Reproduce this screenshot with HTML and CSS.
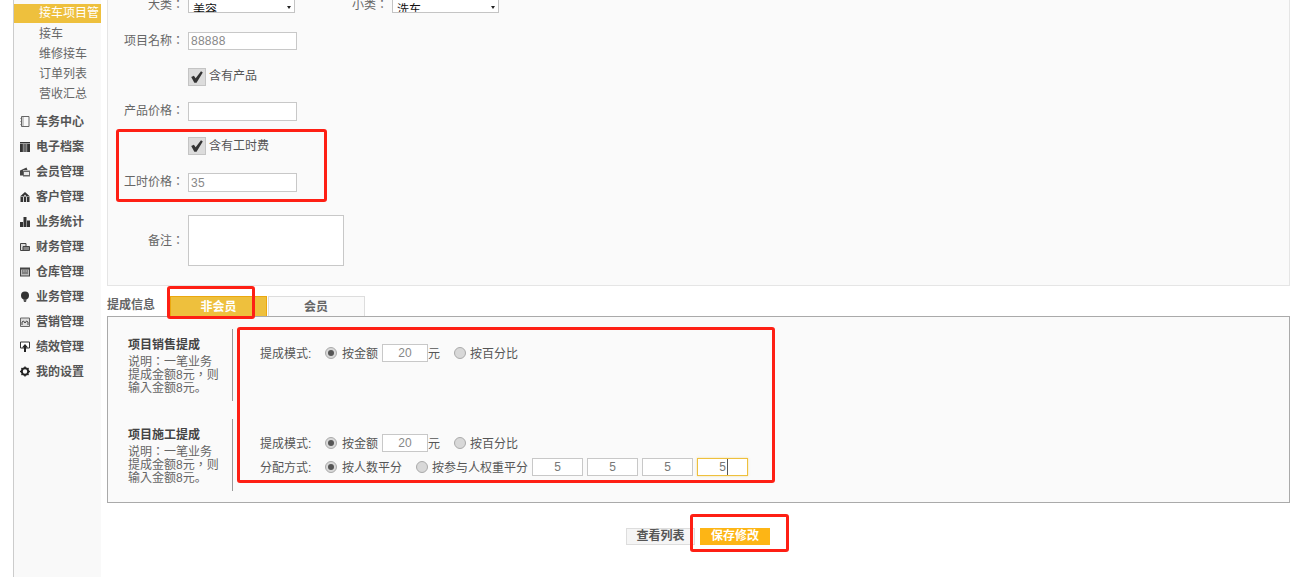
FILE: index.html
```html
<!DOCTYPE html>
<html lang="zh">
<head>
<meta charset="utf-8">
<title>项目编辑</title>
<link rel="stylesheet" href="styles.css">
</head>
<body>
<div class="layout">
  <aside class="sidebar">
    <div class="sub active">接车项目管</div>
    <div class="sub">接车</div>
    <div class="sub">维修接车</div>
    <div class="sub">订单列表</div>
    <div class="sub">营收汇总</div>
    <nav class="menu">
      <div class="menu-item"><svg class="ico" viewBox="0 0 10 11"><path d="M1.500.5h7.500v10H1.500zM.5 2.500h1M.5 5.500h1M.5 8.500h1" fill="none" stroke="#666" stroke-width="1"/><path d="M3 1v9" stroke="#999" stroke-width="1"/></svg>车务中心</div>
      <div class="menu-item"><svg class="ico" viewBox="0 0 10 11"><path d="M0 1h10v10H0z" fill="#333"/><path d="M3.300 3v8M5 3v8M6.700 3v8M0 2.500h10" stroke="#ccc" stroke-width=".7"/></svg>电子档案</div>
      <div class="menu-item"><svg class="ico" viewBox="0 0 10 11"><path d="M0 4.500 6.500 1.500l1 2.500H3v5.500H0z" fill="#444"/><path d="M3 4.500h7v6H3z" fill="#666"/><path d="M4 6h5v3H4z" fill="#e8e8e8"/></svg>会员管理</div>
      <div class="menu-item"><svg class="ico" viewBox="0 0 10 11"><path d="M5 1 10 5.500H0z" fill="#333"/><path d="M.5 6H3v5H.5zM3.800 6h2.400v5H3.800zM7 6h2.500v5H7z" fill="#333"/><circle cx="5" cy="4.500" r=".8" fill="#eee"/></svg>客户管理</div>
      <div class="menu-item"><svg class="ico" viewBox="0 0 10 11"><path d="M0 6h3v5H0zM3.500 1h3v10h-3zM7 4.500h3V11H7z" fill="#333"/></svg>业务统计</div>
      <div class="menu-item"><svg class="ico" viewBox="0 0 10 11"><path d="M.5 2.500h5.500v7H.5z" fill="#ddd" stroke="#444"/><path d="M3 5.500h6.500v4H3z" fill="#888" stroke="#444"/></svg>财务管理</div>
      <div class="menu-item"><svg class="ico" viewBox="0 0 10 11"><path d="M0 1.500h10v9H0z" fill="#444"/><path d="M1 3.500h8v6H1z" fill="#bbb"/><path d="M2 4.500h1.500v1H2zM4.300 4.500h1.500v1H4.300zM6.500 4.500H8v1H6.500zM2 6.500h6v1H2z" fill="#444"/></svg>仓库管理</div>
      <div class="menu-item"><svg class="ico" viewBox="0 0 10 11"><circle cx="5" cy="4.500" r="4" fill="#333"/><path d="M3.300 8h3.400l-.7 3H4z" fill="#555"/></svg>业务管理</div>
      <div class="menu-item"><svg class="ico" viewBox="0 0 10 11"><path d="M.5 2h9v8.500h-9z" fill="#ddd" stroke="#666"/><path d="M2 9V6l1.500-1L5 7l1.500-2L8 6v3" fill="none" stroke="#444"/></svg>营销管理</div>
      <div class="menu-item"><svg class="ico" viewBox="0 0 10 11"><path d="M.5 1h9v6h-9z" fill="#fff" stroke="#333"/><path d="M5 3 8 6.500H6V11H4V6.500H2z" fill="#222"/></svg>绩效管理</div>
      <div class="menu-item"><svg class="ico" viewBox="0 0 10 11"><circle cx="5" cy="5.500" r="3.200" fill="none" stroke="#222" stroke-width="2"/><path d="M5 .5v10M0 5.500h10M1.500 2l7 7M8.500 2l-7 7" stroke="#222" stroke-width="1.400" stroke-dasharray="1.600 6.800"/></svg>我的设置</div>
    </nav>
  </aside>

  <main class="main">
    <section class="panel">
      <div class="row row-select">
        <span class="label" lang="zh-Hant">大类：</span>
        <div class="select"><span class="select-text">美容</span><i class="arrow"></i></div>
        <span class="label label-small" lang="zh-Hant">小类：</span>
        <div class="select"><span class="select-text">洗车</span><i class="arrow"></i></div>
      </div>
      <div class="row row-name">
        <span class="label" lang="zh-Hant">项目名称：</span>
        <input class="field" type="text" value="88888">
      </div>
      <div class="row row-check1">
        <span class="label"></span>
        <span class="check"><svg viewBox="0 0 18 18"><path d="M2.500 9 5.500 7.500 7.500 10.500 13.500 2.500 15.500 4 8.500 15.500 6 15.500z" fill="#333"/></svg></span>
        <span class="check-text">含有产品</span>
      </div>
      <div class="row row-price">
        <span class="label" lang="zh-Hant">产品价格：</span>
        <input class="field field-tall" type="text" value="">
      </div>
      <div class="row row-check2">
        <span class="label"></span>
        <span class="check"><svg viewBox="0 0 18 18"><path d="M2.500 9 5.500 7.500 7.500 10.500 13.500 2.500 15.500 4 8.500 15.500 6 15.500z" fill="#333"/></svg></span>
        <span class="check-text">含有工时费</span>
      </div>
      <div class="row row-hour">
        <span class="label" lang="zh-Hant">工时价格：</span>
        <input class="field field-tall" type="text" value="35">
      </div>
      <div class="row row-note">
        <span class="label" lang="zh-Hant">备注：</span>
        <div class="textarea"></div>
      </div>
    </section>

    <div class="tabs">
      <span class="tabs-title">提成信息</span>
      <span class="tab tab-on">非会员</span>
      <span class="tab tab-off">会员</span>
    </div>

    <section class="box">
      <div class="info info-first">
        <h4>项目销售提成</h4>
        <p lang="zh-Hant">说明：一笔业务<br>提成金额8元，则<br>输入金额8元<span lang="zh-Hans">。</span></p>
      </div>
      <div class="info info-second">
        <h4>项目施工提成</h4>
        <p lang="zh-Hant">说明：一笔业务<br>提成金额8元，则<br>输入金额8元<span lang="zh-Hans">。</span></p>
      </div>
      <div class="opts opts-first">
        <div class="opt-row">
          <span class="opt-label">提成模式:</span>
          <span class="radio radio-on"></span><span class="t1">按金额</span>
          <input class="amount" type="text" value="20"><span class="unit">元</span>
          <span class="radio"></span><span class="t2">按百分比</span>
        </div>
      </div>
      <div class="opts opts-second">
        <div class="opt-row">
          <span class="opt-label">提成模式:</span>
          <span class="radio radio-on"></span><span class="t1">按金额</span>
          <input class="amount" type="text" value="20"><span class="unit">元</span>
          <span class="radio"></span><span class="t2">按百分比</span>
        </div>
        <div class="opt-row opt-row-split">
          <span class="opt-label">分配方式:</span>
          <span class="radio radio-on"></span><span class="t3">按人数平分</span>
          <span class="radio"></span><span class="t4">按参与人权重平分</span>
          <input class="weight" type="text" value="5">
          <input class="weight" type="text" value="5">
          <input class="weight" type="text" value="5">
          <span class="weight weight-focus"><span class="digit">5</span><i class="caret"></i></span>
        </div>
      </div>
    </section>

    <div class="actions">
      <span class="btn btn-list">查看列表</span>
      <span class="btn btn-save">保存修改</span>
    </div>
  </main>
</div>

<div class="mark mark-hour"></div>
<div class="mark mark-tab"></div>
<div class="mark mark-opts"></div>
<div class="mark mark-save"></div>
</body>
</html>
```

FILE: styles.css
```css
* { box-sizing: border-box; }
html, body { margin: 0; height: 577px; overflow: hidden; background: #fff; }
body {
  position: relative;
  font: 12px/16px "Liberation Sans", "Noto Sans CJK SC", sans-serif;
  color: #555;
}
input { font: inherit; outline: none; margin: 0; }

.layout { display: flex; height: 577px; padding-left: 13px; }

.sidebar {
  width: 88px;
  flex: none;
  height: 577px;
  padding-top: 4px;
  background: #f9f9f9;
  border-left: 1px solid #ccc;
  overflow: hidden;
}
.sub { height: 20px; line-height: 20px; padding-left: 25px; white-space: nowrap; color: #666; }
.sub.active { background: #eec03d; color: #fff; height: 19px; line-height: 19px; margin-bottom: 1px; }
.menu { padding-top: 5px; }
.menu-item {
  display: flex;
  align-items: center;
  height: 25px;
  padding-left: 6px;
  font-weight: 700;
  color: #555;
}
.ico { width: 10px; height: 11px; margin-right: 6px; flex: none; }

.main { flex: 1; min-width: 0; margin-left: 6px; margin-right: 4px; margin-top: -8px; }

.panel {
  height: 294px;
  background: #fafafa;
  border: 1px solid #e5e5e5;
  border-top: 0;
}
.row { display: flex; align-items: center; }
.label {
  width: 76px;
  flex: none;
  text-align: right;
  color: #666;
  white-space: nowrap;
  font-family: "Liberation Sans", "Noto Sans CJK TC", sans-serif;
}
.row-select .label { margin-top: 4px; }
.label-small { width: 93px; }
.select {
  position: relative;
  width: 107px;
  height: 21px;
  margin-left: 4px;
  background: #fff;
  border: 1px solid #c4c4c4;
  overflow: hidden;
}
.select-text { position: absolute; left: 4px; top: 9px; height: 10px; overflow: hidden; line-height: 16px; color: #111; }
.arrow {
  position: absolute;
  right: 3px;
  top: 13px;
  border: 2.500px solid transparent;
  border-top: 3px solid #222;
  border-bottom: 0;
}
.row-select { height: 21px; }
.row-name { height: 18px; margin-top: 19px; }
.row-check1 { height: 18px; margin-top: 18px; }
.row-price { height: 19px; margin-top: 16px; }
.row-check2 { height: 18px; margin-top: 16px; }
.row-hour { height: 19px; margin-top: 18px; }
.row-note { height: 51px; margin-top: 23px; }
.row-price .label, .row-hour .label { margin-bottom: 2px; }
.row-check1 .check-text { margin-bottom: 2px; }
.field {
  width: 109px;
  height: 18px;
  margin-left: 4px;
  padding: 1px 2px;
  background: #fff;
  border: 1px solid #c8c8c8;
  color: #888;
  letter-spacing: .25px;
}
.field-tall { height: 19px; }
.check {
  width: 18px;
  height: 18px;
  margin-left: 4px;
  background: #dcdcdc;
  border: 1px solid #c4c4c4;
  display: flex;
}
.check svg { width: 16px; height: 16px; }
.check-text { margin-left: 3px; color: #555; }
.textarea { width: 156px; height: 51px; margin-left: 4px; background: #fff; border: 1px solid #c8c8c8; }

.tabs { display: flex; align-items: flex-end; height: 30px; }
.tabs-title { width: 63px; font-weight: 700; color: #666; line-height: 20px; padding-bottom: 1px; }
.tab { width: 97px; height: 20px; line-height: 20px; text-align: center; font-weight: 700; }
.tab-on { background: #eec03d; border: 1px solid #eba80f; border-bottom: 0; color: #fff; line-height: 21px; }
.tab-off { margin-left: 1px; padding-right: 1px; background: #fafafa; border: 1px solid #ddd; border-bottom: 0; color: #666; }

.box {
  display: grid;
  grid-template-columns: 125px 1fr;
  grid-template-rows: 72px 72px;
  row-gap: 18px;
  height: 187px;
  padding-top: 12px;
  background: #fafafa;
  border: 1px solid #aaa;
  position: relative;
}
.info { padding: 8px 0 0 20px; height: 72px; border-right: 1px solid #999; line-height: 13px; }
.info-first { grid-column: 1; grid-row: 1; }
.info-second { grid-column: 1; grid-row: 2; }
.info h4 { margin: 0 0 3px; font-size: 12px; line-height: 16px; color: #444; }
.info p { margin: 0; color: #666; font-family: "Liberation Sans", "Noto Sans CJK TC", sans-serif; }
.opts { padding-left: 27px; }
.opts-first { grid-column: 2; grid-row: 1; padding-top: 15px; }
.opts-second { grid-column: 2; grid-row: 2; padding-top: 15px; }
.opt-row { display: flex; align-items: center; height: 18px; }
.opt-row-split { margin-top: 6px; }
.opt-label, .t1, .t2, .t3, .t4, .unit { padding-top: 2px; }
.opt-label { width: 65px; color: #555; }
.radio {
  width: 12px;
  height: 12px;
  flex: none;
  border-radius: 50%;
  background: #d8d8d8;
  border: 1px solid #aaa;
  position: relative;
}
.radio-on::after {
  content: "";
  position: absolute;
  left: 2px;
  top: 2px;
  width: 6px;
  height: 6px;
  border-radius: 50%;
  background: #555;
}
.t1 { margin-left: 5px; width: 40px; }
.t2 { margin-left: 4px; }
.t3 { margin-left: 5px; width: 74px; }
.t4 { margin-left: 4px; width: 100px; }
.unit { width: 26px; }
.amount {
  width: 46px;
  height: 18px;
  padding: 0;
  text-align: center;
  background: #fff;
  border: 1px solid #c8c8c8;
  color: #888;
}
.weight {
  width: 51px;
  height: 18px;
  margin-right: 4px;
  padding: 0;
  text-align: center;
  background: #fff;
  border: 1px solid #c8c8c8;
  color: #777;
  flex: none;
}
.weight-focus {
  position: relative;
  display: block;
  line-height: 16px;
  margin-right: 0;
  border-color: #eec03d;
  box-shadow: 0 0 2px rgba(238, 192, 61, .5);
}
.caret { position: absolute; left: 29px; top: 0; width: 1px; height: 16px; background: #555; }

.actions { display: flex; justify-content: center; gap: 5px; margin-top: 25px; padding-right: 1px; }
.btn { height: 17px; line-height: 17px; text-align: center; font-weight: 700; }
.btn-list { width: 69px; background: #f5f5f5; border: 1px solid #ddd; line-height: 15px; color: #555; }
.btn-save { width: 70px; background: #fdb515; color: #fff; }

.mark { position: absolute; border: 3px solid #fe1f14; border-radius: 3px; pointer-events: none; }
.mark-hour { left: 116px; top: 129px; width: 211px; height: 73px; }
.mark-tab { left: 167px; top: 286px; width: 88px; height: 33px; }
.mark-opts { left: 237px; top: 327px; width: 538px; height: 156px; }
.mark-save { left: 690px; top: 514px; width: 99px; height: 38px; }
```
